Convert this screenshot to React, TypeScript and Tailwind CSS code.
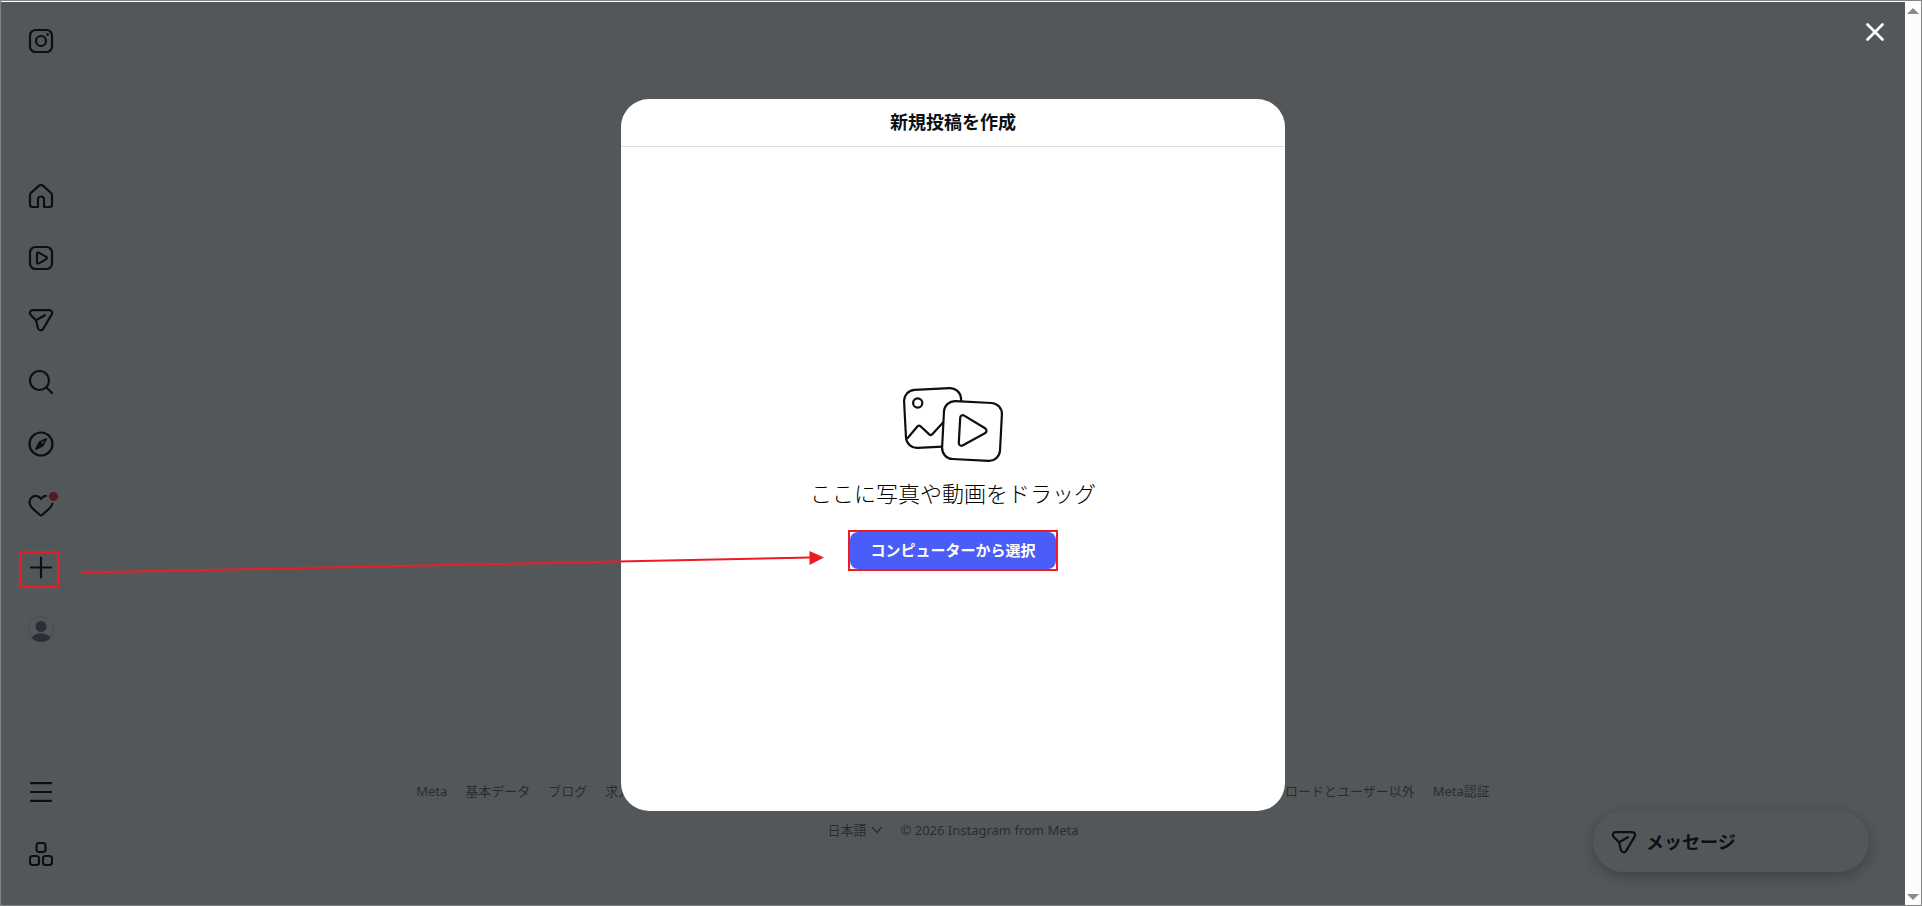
import type { ReactNode } from "react";

function Icon({ children, className = "size-6" }: { children: ReactNode; className?: string }) {
  return (
    <svg
      viewBox="0 0 24 24"
      className={className}
      fill="none"
      stroke="currentColor"
      strokeWidth="2.2"
      strokeLinecap="round"
      strokeLinejoin="round"
      aria-hidden="true"
    >
      {children}
    </svg>
  );
}

function SendIcon() {
  return (
    <Icon className="size-6 overflow-visible">
      <g transform="translate(-1.2 -1.2) scale(1.1)" strokeWidth="2">
        <path d="M13.973 20.046 21.77 6.928C22.8 5.195 21.55 3 19.535 3H4.466C2.138 3 .984 5.825 2.646 7.456l4.842 4.752 1.723 7.121c.548 2.266 3.571 2.721 4.762.717Z" />
        <path d="M7.488 12.208 15.515 7.641" />
      </g>
    </Icon>
  );
}

type NavItem = { label: string; icon: ReactNode };

const mainItems: NavItem[] = [
  {
    label: "ホーム",
    icon: (
      <Icon className="size-6 overflow-visible">
        <path d="M9 23H3.200A2.200 2.200 0 0 1 1 20.800V11.400c0-1.100.4-2 1.200-2.700l7.600-6.800a3.300 3.300 0 0 1 4.400 0l7.600 6.800c.8.7 1.200 1.600 1.200 2.700v9.400a2.200 2.200 0 0 1-2.200 2.200H15v-7.500a3 3 0 0 0-6 0z" />
      </Icon>
    ),
  },
  {
    label: "リール",
    icon: (
      <Icon className="size-6 overflow-visible">
        <rect x="1" y="1" width="22" height="22" rx="5.500" />
        <path d="M8 7.700v8.600c0 1 1 1.600 1.900 1.100l7.300-4.300c.8-.5.8-1.700 0-2.200L9.900 6.600C9 6.100 8 6.700 8 7.700z" />
      </Icon>
    ),
  },
  { label: "メッセージ", icon: <SendIcon /> },
  {
    label: "検索",
    icon: (
      <Icon className="size-6 overflow-visible">
        <circle cx="10.500" cy="10.500" r="9.500" />
        <path d="m17.300 17.300 5.700 5.700" />
      </Icon>
    ),
  },
  {
    label: "発見",
    icon: (
      <Icon className="size-6 overflow-visible">
        <circle cx="12" cy="12" r="11.500" />
        <path
          d="m17.100 7-3.400 6.700-6.800 3.400 3.400-6.800z"
          fill="currentColor"
          strokeWidth="1.800"
        />
        <path d="m12.200 10.400 3.200-1.900-1.700 3.300z" fill="#ffffff" stroke="none" />
      </Icon>
    ),
  },
  {
    label: "お知らせ",
    icon: (
      <span className="relative block">
        <Icon className="size-6 overflow-visible">
          <path d="M16.900 1.800c-2.200.1-3.700 1.300-4.900 3.200C10.700 3 9 1.800 6.800 1.800 3.300 1.800.5 4.700.5 8.300c0 3.300 2.100 5.400 4.600 7.500l5.900 5.200c.6.6 1.400.6 2 0l5.900-5.200c2.500-2.200 4.300-4.100 4.600-6.800" />
        </Icon>
        <span className="absolute -top-1 -right-[7px] size-[13px] rounded-full border-2 border-white bg-[#ff3040]" />
      </span>
    ),
  },
  {
    label: "作成",
    icon: (
      <Icon>
        <path d="M12 1.500v20M2 11.500h20" />
      </Icon>
    ),
  },
  {
    label: "プロフィール",
    icon: (
      <svg viewBox="0 0 26 26" className="-mx-px -mt-0.5 size-[26px]" aria-hidden="true">
        <defs>
          <clipPath id="avatar">
            <circle cx="13" cy="13" r="13" />
          </clipPath>
        </defs>
        <circle cx="13" cy="13" r="12.500" fill="#fafbfd" stroke="#d8dbdf" />
        <g clipPath="url(#avatar)" fill="#737b89">
          <circle cx="13" cy="10.500" r="5.500" />
          <ellipse cx="13" cy="25" rx="10.500" ry="7.800" />
        </g>
      </svg>
    ),
  },
];

const bottomItems: NavItem[] = [
  {
    label: "その他",
    icon: (
      <Icon>
        <path d="M2 3.200h20M2 12h20M2 20.800h20" />
      </Icon>
    ),
  },
  {
    label: "Metaのその他のサービス",
    icon: (
      <Icon>
        <rect x="7.500" y="1" width="9" height="9" rx="2.500" />
        <rect x="1" y="14" width="9" height="9" rx="2.500" />
        <rect x="14" y="14" width="9" height="9" rx="2.500" />
      </Icon>
    ),
  },
];

const footerLinks = [
  "Meta",
  "基本データ",
  "ブログ",
  "求人",
  "ヘルプ",
  "API",
  "プライバシー",
  "規約",
  "位置情報",
  "Instagram Lite",
  "Meta AI",
  "Threads",
  "連絡先のアップロードとユーザー以外",
  "Meta認証",
];

function NavLink({ item }: { item: NavItem }) {
  return (
    <li>
      <a href="#" aria-label={item.label} className="block">
        {item.icon}
      </a>
    </li>
  );
}

function Sidebar() {
  return (
    <nav className="flex w-20 shrink-0 flex-col items-center justify-between pt-[27px] pb-[39px]">
      <a href="#" aria-label="Instagram">
        <Icon className="size-6 overflow-visible">
          <rect x="1" y="1" width="22" height="22" rx="5.500" />
          <circle cx="12" cy="12" r="5" />
          <circle cx="18.500" cy="5.600" r="1.400" fill="currentColor" stroke="none" />
        </Icon>
      </a>
      <ul className="mb-2 flex flex-col gap-[38px]">
        {mainItems.map((item) => (
          <NavLink key={item.label} item={item} />
        ))}
      </ul>
      <ul className="flex flex-col gap-[38px]">
        {bottomItems.map((item) => (
          <NavLink key={item.label} item={item} />
        ))}
      </ul>
    </nav>
  );
}

function Footer() {
  return (
    <footer className="mb-[65px] flex flex-col items-center gap-[19px] text-[13px] leading-5 text-[#6a717a]">
      <ul className="flex gap-[18px] whitespace-nowrap">
        {footerLinks.map((text) => (
          <li key={text}>
            <a href="#">{text}</a>
          </li>
        ))}
      </ul>
      <div className="flex gap-[18px]">
        <button type="button" className="flex items-center gap-1">
          日本語
          <svg viewBox="0 0 12 12" className="size-3" fill="none" stroke="currentColor" aria-hidden="true">
            <path d="m1 3 5 5.500L11 3" strokeWidth="1.300" />
          </svg>
        </button>
        <span>© 2026 Instagram from Meta</span>
      </div>
    </footer>
  );
}

function MediaIcon() {
  return (
    <svg
      viewBox="0 0 101 77"
      className="h-[77px] w-[101px]"
      fill="none"
      stroke="currentColor"
      strokeWidth="2.2"
      strokeLinecap="round"
      strokeLinejoin="round"
      aria-hidden="true"
    >
      <rect x="2" y="3" width="57" height="58" rx="11" transform="rotate(-3 30.500 32)" />
      <circle cx="14.700" cy="17" r="4.600" />
      <path d="M4.700 52 14.600 40.300c.9-1 2-1 2.900-.1l8.700 8.200c1 1 2.200.9 3.100-.1L40.500 36" />
      <rect x="40" y="16" width="58" height="58" rx="11" fill="#ffffff" transform="rotate(3 69 45)" />
      <path d="M57.200 31.800c.1-2 2.200-3.200 4-2.200l20.900 12.700c2 1.300 1.900 3.900-.2 5L60 59.300c-2 1.100-4.300-.1-4.200-2.400z" />
    </svg>
  );
}

function CreateDialog() {
  return (
    <section
      role="dialog"
      aria-modal="true"
      aria-labelledby="create-title"
      className="flex w-[664px] max-w-full flex-col overflow-hidden rounded-[28px] bg-white"
    >
      <header className="flex h-12 items-center justify-center border-b border-[#dbdfe4]">
        <h1 id="create-title" className="text-lg font-bold">
          新規投稿を作成
        </h1>
      </header>
      <div className="flex aspect-square flex-col items-center justify-center">
        <MediaIcon />
        <p className="mt-3 mb-[19px] text-[22px] leading-9 font-light text-black">
          ここに写真や動画をドラッグ
        </p>
        <div className="border-2 border-[#ed1c24]">
          <button
            type="button"
            className="block h-[37px] rounded-lg bg-[#4a5df9] px-5 text-[15px] font-bold text-white"
          >
            コンピューターから選択
          </button>
        </div>
      </div>
    </section>
  );
}

function Annotations() {
  return (
    <>
      <div className="absolute top-[549px] left-[18px] h-[37px] w-10 border-2 border-[#ed1c24]" />
      <svg
        viewBox="0 0 744 24"
        className="absolute top-[549px] left-20 h-6 w-[744px]"
        fill="#ed1c24"
        aria-hidden="true"
      >
        <path d="M1 21.500 730 6.500" stroke="#ed1c24" strokeWidth="2" strokeLinecap="round" />
        <path d="M728.500 0v14L743 6.500z" />
      </svg>
    </>
  );
}

function ScrollTrack() {
  return (
    <div className="flex w-4 shrink-0 flex-col items-center justify-between bg-[#fcfcfc] pt-1.5 pb-[5px] text-[#8b8b8b]">
      <svg viewBox="0 0 12 6" className="h-1.5 w-3" fill="currentColor" aria-hidden="true">
        <path d="M6 0 12 6H0z" />
      </svg>
      <svg viewBox="0 0 12 6" className="h-1.5 w-3" fill="currentColor" aria-hidden="true">
        <path d="M0 0h12L6 6z" />
      </svg>
    </div>
  );
}

export default function App() {
  return (
    <div className="flex h-screen border border-[#828282] bg-white pt-px font-['Noto_Sans','Noto_Sans_CJK_JP',sans-serif] text-[#0c1014]">
      <div className="relative flex min-w-0 flex-1 overflow-hidden">
        <Sidebar />
        <main className="-ml-20 flex min-w-0 flex-1 flex-col justify-end">
          <Footer />
        </main>
        <button
          type="button"
          className="absolute right-9 bottom-[33px] flex h-[61px] w-[276px] items-center gap-2.5 rounded-full bg-white px-[19px] text-lg font-semibold shadow-[0_4px_16px_rgba(0,0,0,0.3)]"
        >
          <SendIcon />
          メッセージ
        </button>
        <div className="absolute inset-0 flex items-center justify-center bg-[#0c1014]/70 pt-0.5">
          <CreateDialog />
          <button type="button" aria-label="閉じる" className="absolute top-[21px] right-[21px] text-white">
            <svg
              viewBox="0 0 18 18"
              className="size-[18px]"
              fill="none"
              stroke="currentColor"
              strokeWidth="2.700"
              strokeLinecap="round"
              aria-hidden="true"
            >
              <path d="m1.500 1.500 15 15M16.500 1.500l-15 15" />
            </svg>
          </button>
        </div>
        <Annotations />
      </div>
      <ScrollTrack />
    </div>
  );
}
